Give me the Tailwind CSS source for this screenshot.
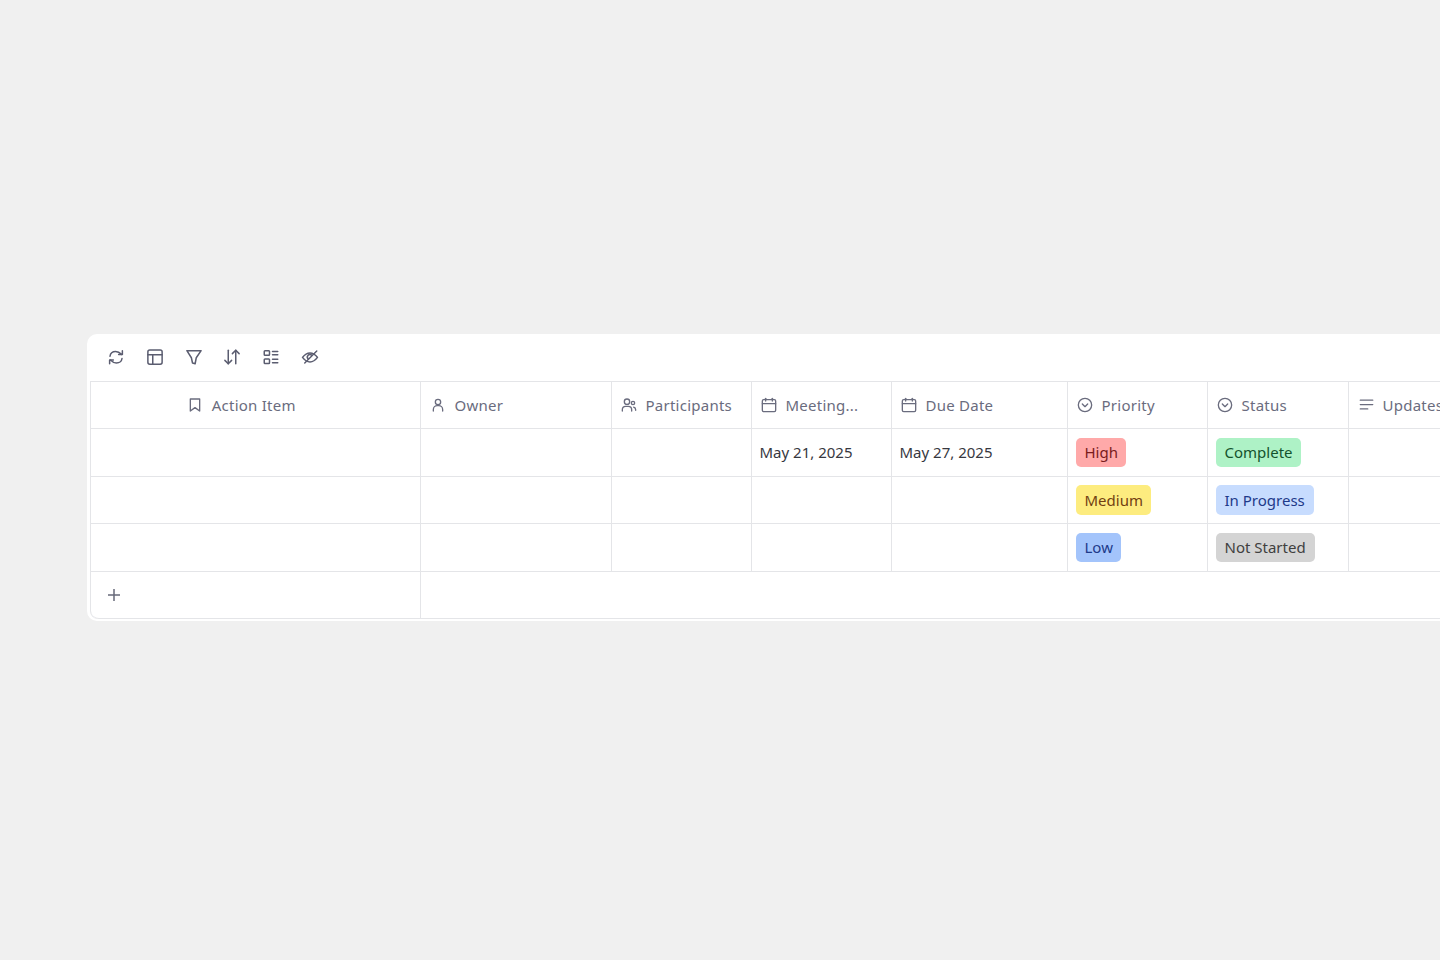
<!DOCTYPE html>
<html lang="en">
<head>
    <meta charset="UTF-8">
    <meta name="viewport" content="width=device-width, initial-scale=1.0">
    <title>Action Items</title>
    <script src="https://cdn.jsdelivr.net/npm/@tailwindcss/browser@4"></script>
</head>
<body class="bg-[#f0f0f0] font-['Noto_Sans',sans-serif] h-screen overflow-hidden pt-[334px] pl-[87px]">
    <div class="w-[1353px] overflow-hidden h-[287px] bg-white rounded-l-[10px] pl-[3px]">
        <!-- Toolbar -->
        <div class="h-[46.500px] flex items-center gap-[20.800px] pl-[17px] text-[#5b5d70]">
            <svg class="w-[18px] h-[18px]" viewBox="0 0 24 24" fill="none" stroke="currentColor" stroke-width="2" stroke-linecap="round" stroke-linejoin="round"><path d="M4 11c.500-4 3.500-6.500 7.500-6.500 3 0 5.500 1.500 8 4"/><path d="M20.500 3.500v5h-5"/><path d="M20 14c-.500 3.500-3.500 6-7.500 6-3 0-5.500-1.500-8-4"/><path d="M3.500 21v-5h5"/></svg>
            <svg class="w-[18px] h-[18px]" viewBox="0 0 24 24" fill="none" stroke="currentColor" stroke-width="2" stroke-linecap="round" stroke-linejoin="round"><rect x="2.500" y="2.500" width="19" height="19" rx="2.500"/><path d="M2.500 9h19"/><path d="M9 9v12.500"/></svg>
            <svg class="w-[18px] h-[18px]" viewBox="0 0 24 24" fill="none" stroke="currentColor" stroke-width="2" stroke-linecap="round" stroke-linejoin="round"><path d="M2.500 3.500h19l-6.500 9.500-1.500 8-3.500-1-1.500-7z"/></svg>
            <svg class="w-[18px] h-[18px]" viewBox="0 0 24 24" fill="none" stroke="currentColor" stroke-width="2" stroke-linecap="round" stroke-linejoin="round"><path d="M7 3v18"/><path d="M2.500 16.500l4.500 4.500 4.500-4.500"/><path d="M17 21V3"/><path d="M12.500 7.500l4.500-4.500 4.500 4.500"/></svg>
            <svg class="w-[18px] h-[18px]" viewBox="0 0 24 24" fill="none" stroke="currentColor" stroke-width="2" stroke-linecap="round" stroke-linejoin="round"><rect x="3" y="3.500" width="7" height="6" rx="1"/><rect x="3" y="14.500" width="7" height="6" rx="1"/><path d="M14 4.500h7"/><path d="M14 9h7"/><path d="M14 15h7"/><path d="M14 19.500h7"/></svg>
            <svg class="w-[18px] h-[18px]" viewBox="0 0 24 24" fill="none" stroke="currentColor" stroke-width="2" stroke-linecap="round" stroke-linejoin="round"><path d="M2 12.500C5 8.500 8 6.500 12 6.500s7 2 10 6c-3 4-6 6-10 6s-7-2-10-6z"/><path d="M9.500 14.500a3.200 3.200 0 0 1 4.800-4.800"/><path d="M21 4L5 20"/></svg>
        </div>

        <!-- Table -->
        <div class="grid grid-cols-[329.500px_191px_140px_140px_176px_140px_141px_150px] grid-rows-[47.500px_47.500px_47.500px_47.500px_47.500px] text-[15px] border-t border-l border-[#e4e5e8] rounded-bl-[8px] h-[238px]">
            <!-- Header -->
            <div class="border-r border-b border-[#e4e5e8] flex items-center justify-center gap-[9px] text-[#6a6c7e] tracking-[0.25px] pr-[28px]">
                <svg class="w-[16px] h-[16px]" viewBox="0 0 24 24" fill="none" stroke="currentColor" stroke-width="2" stroke-linecap="round" stroke-linejoin="round"><path d="M5 3h14v18l-7-5-7 5z"/></svg>
                <span>Action Item</span>
            </div>
            <div class="border-r border-b border-[#e4e5e8] flex items-center gap-[9px] pl-[9px] text-[#6a6c7e] tracking-[0.25px]">
                <svg class="w-[16px] h-[16px]" viewBox="0 0 24 24" fill="none" stroke="currentColor" stroke-width="2" stroke-linecap="round" stroke-linejoin="round"><circle cx="12" cy="7.500" r="4"/><path d="M5 21v-2a6 6 0 0 1 6-6h2a6 6 0 0 1 6 6v2"/></svg>
                <span>Owner</span>
            </div>
            <div class="border-r border-b border-[#e4e5e8] flex items-center gap-[9px] pl-[9px] text-[#6a6c7e] tracking-[0.25px]">
                <svg class="w-[16px] h-[16px]" viewBox="0 0 24 24" fill="none" stroke="currentColor" stroke-width="2" stroke-linecap="round" stroke-linejoin="round"><circle cx="9" cy="7" r="4"/><path d="M2 21v-2a5 5 0 0 1 5-5h4a5 5 0 0 1 5 5v2"/><circle cx="18" cy="9" r="2.500"/><path d="M22 20v-1a4 4 0 0 0-3-3.800"/></svg>
                <span>Participants</span>
            </div>
            <div class="border-r border-b border-[#e4e5e8] flex items-center gap-[9px] pl-[9px] text-[#6a6c7e] tracking-[0.25px]">
                <svg class="w-[16px] h-[16px]" viewBox="0 0 24 24" fill="none" stroke="currentColor" stroke-width="2" stroke-linecap="round" stroke-linejoin="round"><rect x="2" y="4" width="20" height="18" rx="2"/><path d="M2 10h20"/><path d="M7 2v4"/><path d="M17 2v4"/></svg>
                <span>Meeting...</span>
            </div>
            <div class="border-r border-b border-[#e4e5e8] flex items-center gap-[9px] pl-[9px] text-[#6a6c7e] tracking-[0.25px]">
                <svg class="w-[16px] h-[16px]" viewBox="0 0 24 24" fill="none" stroke="currentColor" stroke-width="2" stroke-linecap="round" stroke-linejoin="round"><rect x="2" y="4" width="20" height="18" rx="2"/><path d="M2 10h20"/><path d="M7 2v4"/><path d="M17 2v4"/></svg>
                <span>Due Date</span>
            </div>
            <div class="border-r border-b border-[#e4e5e8] flex items-center gap-[9px] pl-[9px] text-[#6a6c7e] tracking-[0.25px]">
                <svg class="w-[16px] h-[16px]" viewBox="0 0 24 24" fill="none" stroke="currentColor" stroke-width="2" stroke-linecap="round" stroke-linejoin="round"><circle cx="12" cy="12" r="10"/><path d="M8 10.500l4 4 4-4"/></svg>
                <span>Priority</span>
            </div>
            <div class="border-r border-b border-[#e4e5e8] flex items-center gap-[9px] pl-[9px] text-[#6a6c7e] tracking-[0.25px]">
                <svg class="w-[16px] h-[16px]" viewBox="0 0 24 24" fill="none" stroke="currentColor" stroke-width="2" stroke-linecap="round" stroke-linejoin="round"><circle cx="12" cy="12" r="10"/><path d="M8 10.500l4 4 4-4"/></svg>
                <span>Status</span>
            </div>
            <div class="border-b border-[#e4e5e8] flex items-center gap-[9px] pl-[10px] text-[#6a6c7e] tracking-[0.25px] whitespace-nowrap">
                <svg class="w-[15px] h-[15px]" viewBox="0 0 24 24" fill="none" stroke="currentColor" stroke-width="2" stroke-linecap="round" stroke-linejoin="round"><path d="M2 5h20"/><path d="M2 12h20"/><path d="M2 19h12"/></svg>
                <span>Updates</span>
            </div>

            <!-- Row 1 -->
            <div class="border-r border-b border-[#e4e5e8]"></div>
            <div class="border-r border-b border-[#e4e5e8]"></div>
            <div class="border-r border-b border-[#e4e5e8]"></div>
            <div class="border-r border-b border-[#e4e5e8] flex items-center pl-[8px] text-[#37383f]">May 21, 2025</div>
            <div class="border-r border-b border-[#e4e5e8] flex items-center pl-[8px] text-[#37383f]">May 27, 2025</div>
            <div class="border-r border-b border-[#e4e5e8] flex items-center pl-[8.500px]"><span class="h-[29.500px] flex items-center px-[8.500px] rounded-[5px] bg-[#ffa9a9] text-[#7a1c1c]">High</span></div>
            <div class="border-r border-b border-[#e4e5e8] flex items-center pl-[8.500px]"><span class="h-[29.500px] flex items-center px-[8.500px] rounded-[5px] bg-[#aef2c6] text-[#14532d]">Complete</span></div>
            <div class="border-b border-[#e4e5e8]"></div>

            <!-- Row 2 -->
            <div class="border-r border-b border-[#e4e5e8]"></div>
            <div class="border-r border-b border-[#e4e5e8]"></div>
            <div class="border-r border-b border-[#e4e5e8]"></div>
            <div class="border-r border-b border-[#e4e5e8]"></div>
            <div class="border-r border-b border-[#e4e5e8]"></div>
            <div class="border-r border-b border-[#e4e5e8] flex items-center pl-[8.500px]"><span class="h-[29.500px] flex items-center px-[8.500px] rounded-[5px] bg-[#fdec7f] text-[#713f12]">Medium</span></div>
            <div class="border-r border-b border-[#e4e5e8] flex items-center pl-[8.500px]"><span class="h-[29.500px] flex items-center pl-[8.500px] pr-[9px] rounded-[5px] bg-[#c7dcfe] text-[#1e3a8a]">In Progress</span></div>
            <div class="border-b border-[#e4e5e8]"></div>

            <!-- Row 3 -->
            <div class="border-r border-b border-[#e4e5e8]"></div>
            <div class="border-r border-b border-[#e4e5e8]"></div>
            <div class="border-r border-b border-[#e4e5e8]"></div>
            <div class="border-r border-b border-[#e4e5e8]"></div>
            <div class="border-r border-b border-[#e4e5e8]"></div>
            <div class="border-r border-b border-[#e4e5e8] flex items-center pl-[8.500px]"><span class="h-[29.500px] flex items-center px-[8.500px] rounded-[5px] bg-[#a3c4fb] text-[#1e3a8a]">Low</span></div>
            <div class="border-r border-b border-[#e4e5e8] flex items-center pl-[8.500px]"><span class="h-[29.500px] flex items-center pl-[8.500px] pr-[9px] rounded-[5px] bg-[#d4d4d4] text-[#404040]">Not Started</span></div>
            <div class="border-b border-[#e4e5e8]"></div>

            <!-- Add row -->
            <div class="border-r border-b border-[#e4e5e8] rounded-bl-[8px] flex items-center pl-[16px] text-[#666879]">
                <svg class="w-[14px] h-[14px]" viewBox="0 0 14 14" fill="none" stroke="currentColor" stroke-width="1.500"><path d="M7 1v12"/><path d="M1 7h12"/></svg>
            </div>
            <div class="col-span-7 border-b border-[#e4e5e8]"></div>
        </div>
    </div>
</body>
</html>
